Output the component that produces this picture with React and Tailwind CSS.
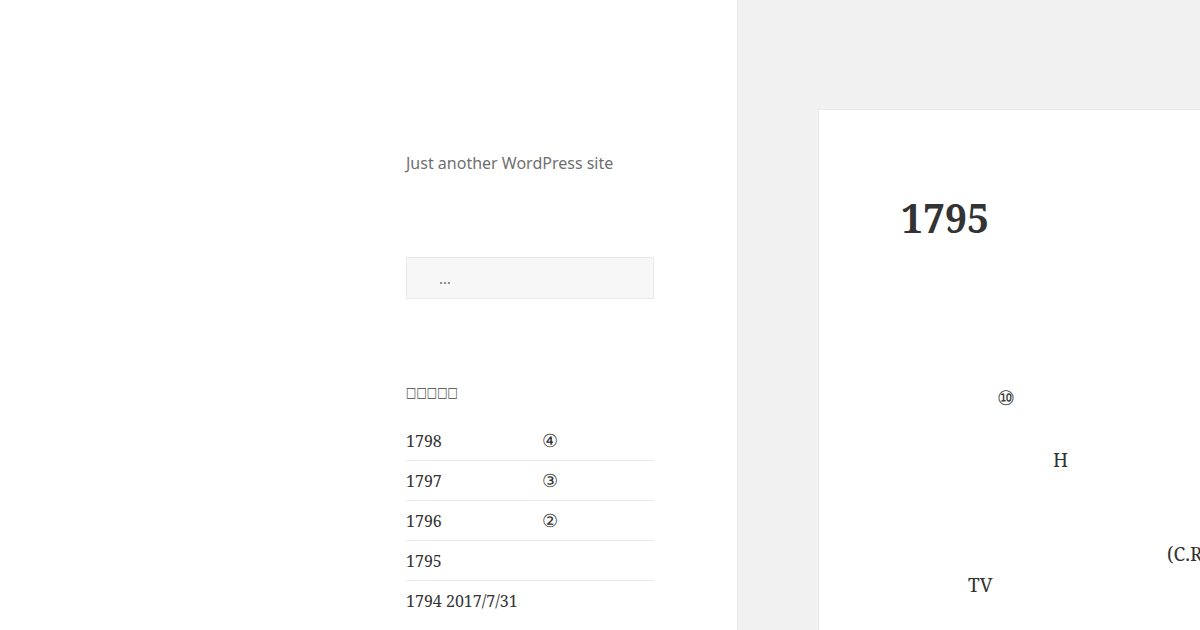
export default function App() {
  const serif = { fontFamily: '"Noto Serif", "DejaVu Serif", "Liberation Serif", serif' };
  const rows = [
    { a: "1798", b: "④" },
    { a: "1797", b: "③" },
    { a: "1796", b: "②" },
    { a: "1795", b: "" },
    { a: "1794 2017/7/31", b: "" },
  ];
  return (
    <div className="flex h-[630px] w-[1200px] overflow-hidden bg-[#f1f1f1]">
      <aside className="relative z-10 flex h-full w-[737px] shrink-0 justify-end bg-white pr-[83px] shadow-[0_0_1px_rgba(0,0,0,0.15)]">
        <div className="w-[248px] pt-[151px]">
          <p className="h-[24px] text-[16px] leading-[24px] text-[#707070] [font-family:'Noto_Sans','Open_Sans',sans-serif]">
            Just another WordPress site
          </p>
          <div className="mt-[82px] flex h-[42px] items-center border border-[#eaeaea] bg-[#f7f7f7] pl-[32px] text-[15px] text-[#707070] [font-family:'Noto_Sans','Open_Sans',sans-serif]">
            …
          </div>
          <h2 className="mt-[84px] h-[20px] text-[11px] leading-[20px] tracking-[0px] text-[#444] [font-family:'DejaVu_Sans',sans-serif]">
            <span className="inline-block origin-center scale-y-[1.3]">□□□□□</span>
          </h2>
          <ul className="mt-[18px] text-[16px] text-[#333]" style={serif}>
            {rows.map((r, i) => (
              <li
                key={i}
                className={`flex h-[40px] items-center ${i < rows.length - 1 ? "border-b border-[#eaeaea]" : ""}`}
              >
                <span className="w-[136px] shrink-0">{r.a}</span>
                <span className="text-[18px]">{r.b}</span>
              </li>
            ))}
          </ul>
        </div>
      </aside>
      <main className="flex-1 pl-[82px] pt-[110px]">
        <article className="h-[600px] w-[500px] bg-white pl-[82px] pt-[84px] text-[#333] shadow-[0_0_1px_rgba(0,0,0,0.15)]" style={serif}>
          <h1 className="text-[39px] font-bold leading-[47px]">1795</h1>
          <div className="mt-[141px] text-[19px] leading-[31.33px] whitespace-nowrap">
            <div className="h-[31.33px] pl-[96px] text-[20px]">⑩</div>
            <div className="h-[31.33px]"></div>
            <div className="h-[31.33px] pl-[152px]">H</div>
            <div className="h-[31.33px]"></div>
            <div className="h-[31.33px]"></div>
            <div className="h-[31.33px] pl-[266px]">(C.R</div>
            <div className="h-[31.33px] pl-[67px]">TV</div>
          </div>
        </article>
      </main>
    </div>
  );
}
